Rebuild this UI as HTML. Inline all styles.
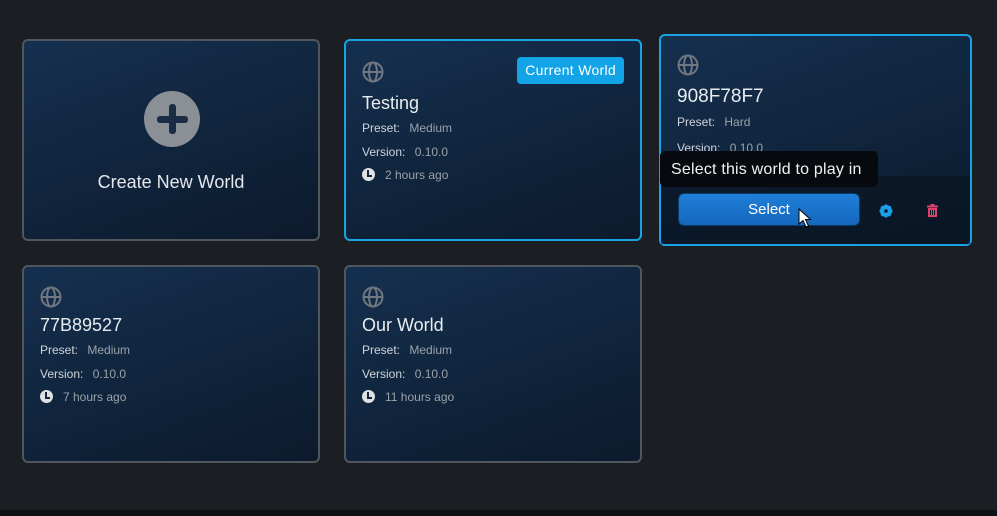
<!DOCTYPE html>
<html><head><style>
body{margin:0;width:997px;height:516px;background:#1b1e22;font-family:"Liberation Sans",sans-serif;position:relative;overflow:hidden}
.card{position:absolute;box-sizing:border-box;border:2px solid #50565e;border-radius:6px;background:linear-gradient(160deg,#15304f,#0c1a2c);color:#e4e8ec}
.sel{border-color:#1aa3e3}
.glob{position:absolute;left:16px;top:20px}
.title{position:absolute;left:16px;top:50px;font-size:18px;color:#e8ecef}
.row{position:absolute;left:16px;font-size:12px;color:#d0d4d8}
.row span{color:#9aa2aa;margin-left:6px}
.clock{display:inline-block;width:13px;height:13px;border-radius:50%;background:#dfe2e5;vertical-align:-2px;margin-right:10px;position:relative}
.clock:after{content:"";position:absolute;left:5px;top:2px;width:3px;height:5px;border-left:2px solid #14263d;border-bottom:2px solid #14263d}
.time{color:#9aa2aa}
</style></head><body>
<svg width="0" height="0" style="position:absolute"><defs><g id="g"><circle cx="11" cy="11" r="9.5" fill="none" stroke="#707780" stroke-width="2"/><ellipse cx="11" cy="11" rx="4" ry="9.5" fill="none" stroke="#707780" stroke-width="2"/><line x1="1.5" y1="11" x2="20.5" y2="11" stroke="#707780" stroke-width="2"/></g></defs></svg>

<div class="card" style="left:22px;top:39px;width:298px;height:202px">
<div style="position:absolute;left:120px;top:50px;width:56px;height:56px;border-radius:50%;background:#8b9097"></div>
<div style="position:absolute;left:145px;top:63px;width:7px;height:30px;background:#1a2d45;border-radius:3px"></div>
<div style="position:absolute;left:133px;top:75px;width:31px;height:7px;background:#1a2d45;border-radius:3px"></div>
<div style="position:absolute;left:0;width:100%;top:131px;text-align:center;font-size:18px;color:#e4e8ec">Create New World</div>
</div>

<div class="card sel" style="left:344px;top:39px;width:298px;height:202px">
<svg class="glob" width="22" height="22" style="top:20px"><use href="#g"/></svg>
<div style="position:absolute;right:16px;top:16px;background:#12a4e6;color:#fff;font-size:14px;padding:5px 8px 6px 8px;border-radius:4px;letter-spacing:0.3px">Current World</div>
<div class="title" style="top:52px">Testing</div>
<div class="row" style="top:80px">Preset: <span>Medium</span></div>
<div class="row" style="top:104px">Version: <span>0.10.0</span></div>
<div class="row time" style="top:127px"><i class="clock"></i>2 hours ago</div>
</div>

<div class="card sel" style="left:659px;top:34px;width:313px;height:212px">
<svg class="glob" width="22" height="22" style="top:18px"><use href="#g"/></svg>
<div class="title" style="top:50px;font-size:19px">908F78F7</div>
<div class="row" style="top:79px">Preset: <span>Hard</span></div>
<div class="row" style="top:105px">Version: <span>0.10.0</span></div>
<div style="position:absolute;left:0;right:0;top:140px;bottom:0;background:rgba(8,18,30,0.55)"></div>
<div style="position:absolute;left:17px;top:157px;width:182px;height:33px;box-sizing:border-box;border:1px solid #0c3b6c;border-radius:6px;background:linear-gradient(#1e7fd8,#1567bd);color:#fff;font-size:15px;text-align:center;line-height:31px">Select</div>
<svg style="position:absolute;left:218px;top:168px" width="14" height="14" viewBox="0 0 14 14"><circle cx="7" cy="7" r="4.5" fill="none" stroke="#19a0e8" stroke-width="3"/><g stroke="#19a0e8" stroke-width="2.5"><line x1="7" y1="0.5" x2="7" y2="13.5"/><line x1="0.5" y1="7" x2="13.5" y2="7"/><line x1="2.4" y1="2.4" x2="11.6" y2="11.6"/><line x1="11.6" y1="2.4" x2="2.4" y2="11.6"/></g><circle cx="7" cy="7" r="1.8" fill="#0c1a2c"/></svg>
<svg style="position:absolute;left:266px;top:168px" width="11" height="13" viewBox="0 0 11 13"><rect x="0" y="1.5" width="11" height="2" fill="#e0406a"/><rect x="3.5" y="0" width="4" height="2" fill="#e0406a"/><rect x="1" y="4" width="9" height="9" fill="#e0406a"/><rect x="3" y="6" width="1" height="5" fill="#0c1a2c"/><rect x="5" y="6" width="1" height="5" fill="#0c1a2c"/><rect x="7" y="6" width="1" height="5" fill="#0c1a2c"/></svg>
</div>
<div style="position:absolute;left:660px;top:151px;width:218px;height:36px;background:#06090d;border-radius:5px;color:#f0f2f4;font-size:16px;line-height:37px;padding-left:11px;box-sizing:border-box;letter-spacing:0.2px">Select this world to play in</div>
<svg style="position:absolute;left:798px;top:208px" width="14" height="22" viewBox="0 0 14 22"><path d="M1 1 L1 16 L5 12.5 L8 19 L10.5 18 L7.5 11.5 L12.5 11.5 Z" fill="#fff" stroke="#000" stroke-width="1"/></svg>

<div class="card" style="left:22px;top:265px;width:298px;height:198px">
<svg class="glob" width="22" height="22" style="top:19px"><use href="#g"/></svg>
<div class="title" style="top:48px">77B89527</div>
<div class="row" style="top:76px">Preset: <span>Medium</span></div>
<div class="row" style="top:100px">Version: <span>0.10.0</span></div>
<div class="row time" style="top:123px"><i class="clock"></i>7 hours ago</div>
</div>

<div class="card" style="left:344px;top:265px;width:298px;height:198px">
<svg class="glob" width="22" height="22" style="top:19px"><use href="#g"/></svg>
<div class="title" style="top:48px">Our World</div>
<div class="row" style="top:76px">Preset: <span>Medium</span></div>
<div class="row" style="top:100px">Version: <span>0.10.0</span></div>
<div class="row time" style="top:123px"><i class="clock"></i>11 hours ago</div>
</div>
<div style="position:absolute;left:0;right:0;top:510px;height:6px;background:#0e1013"></div>
</body></html>
